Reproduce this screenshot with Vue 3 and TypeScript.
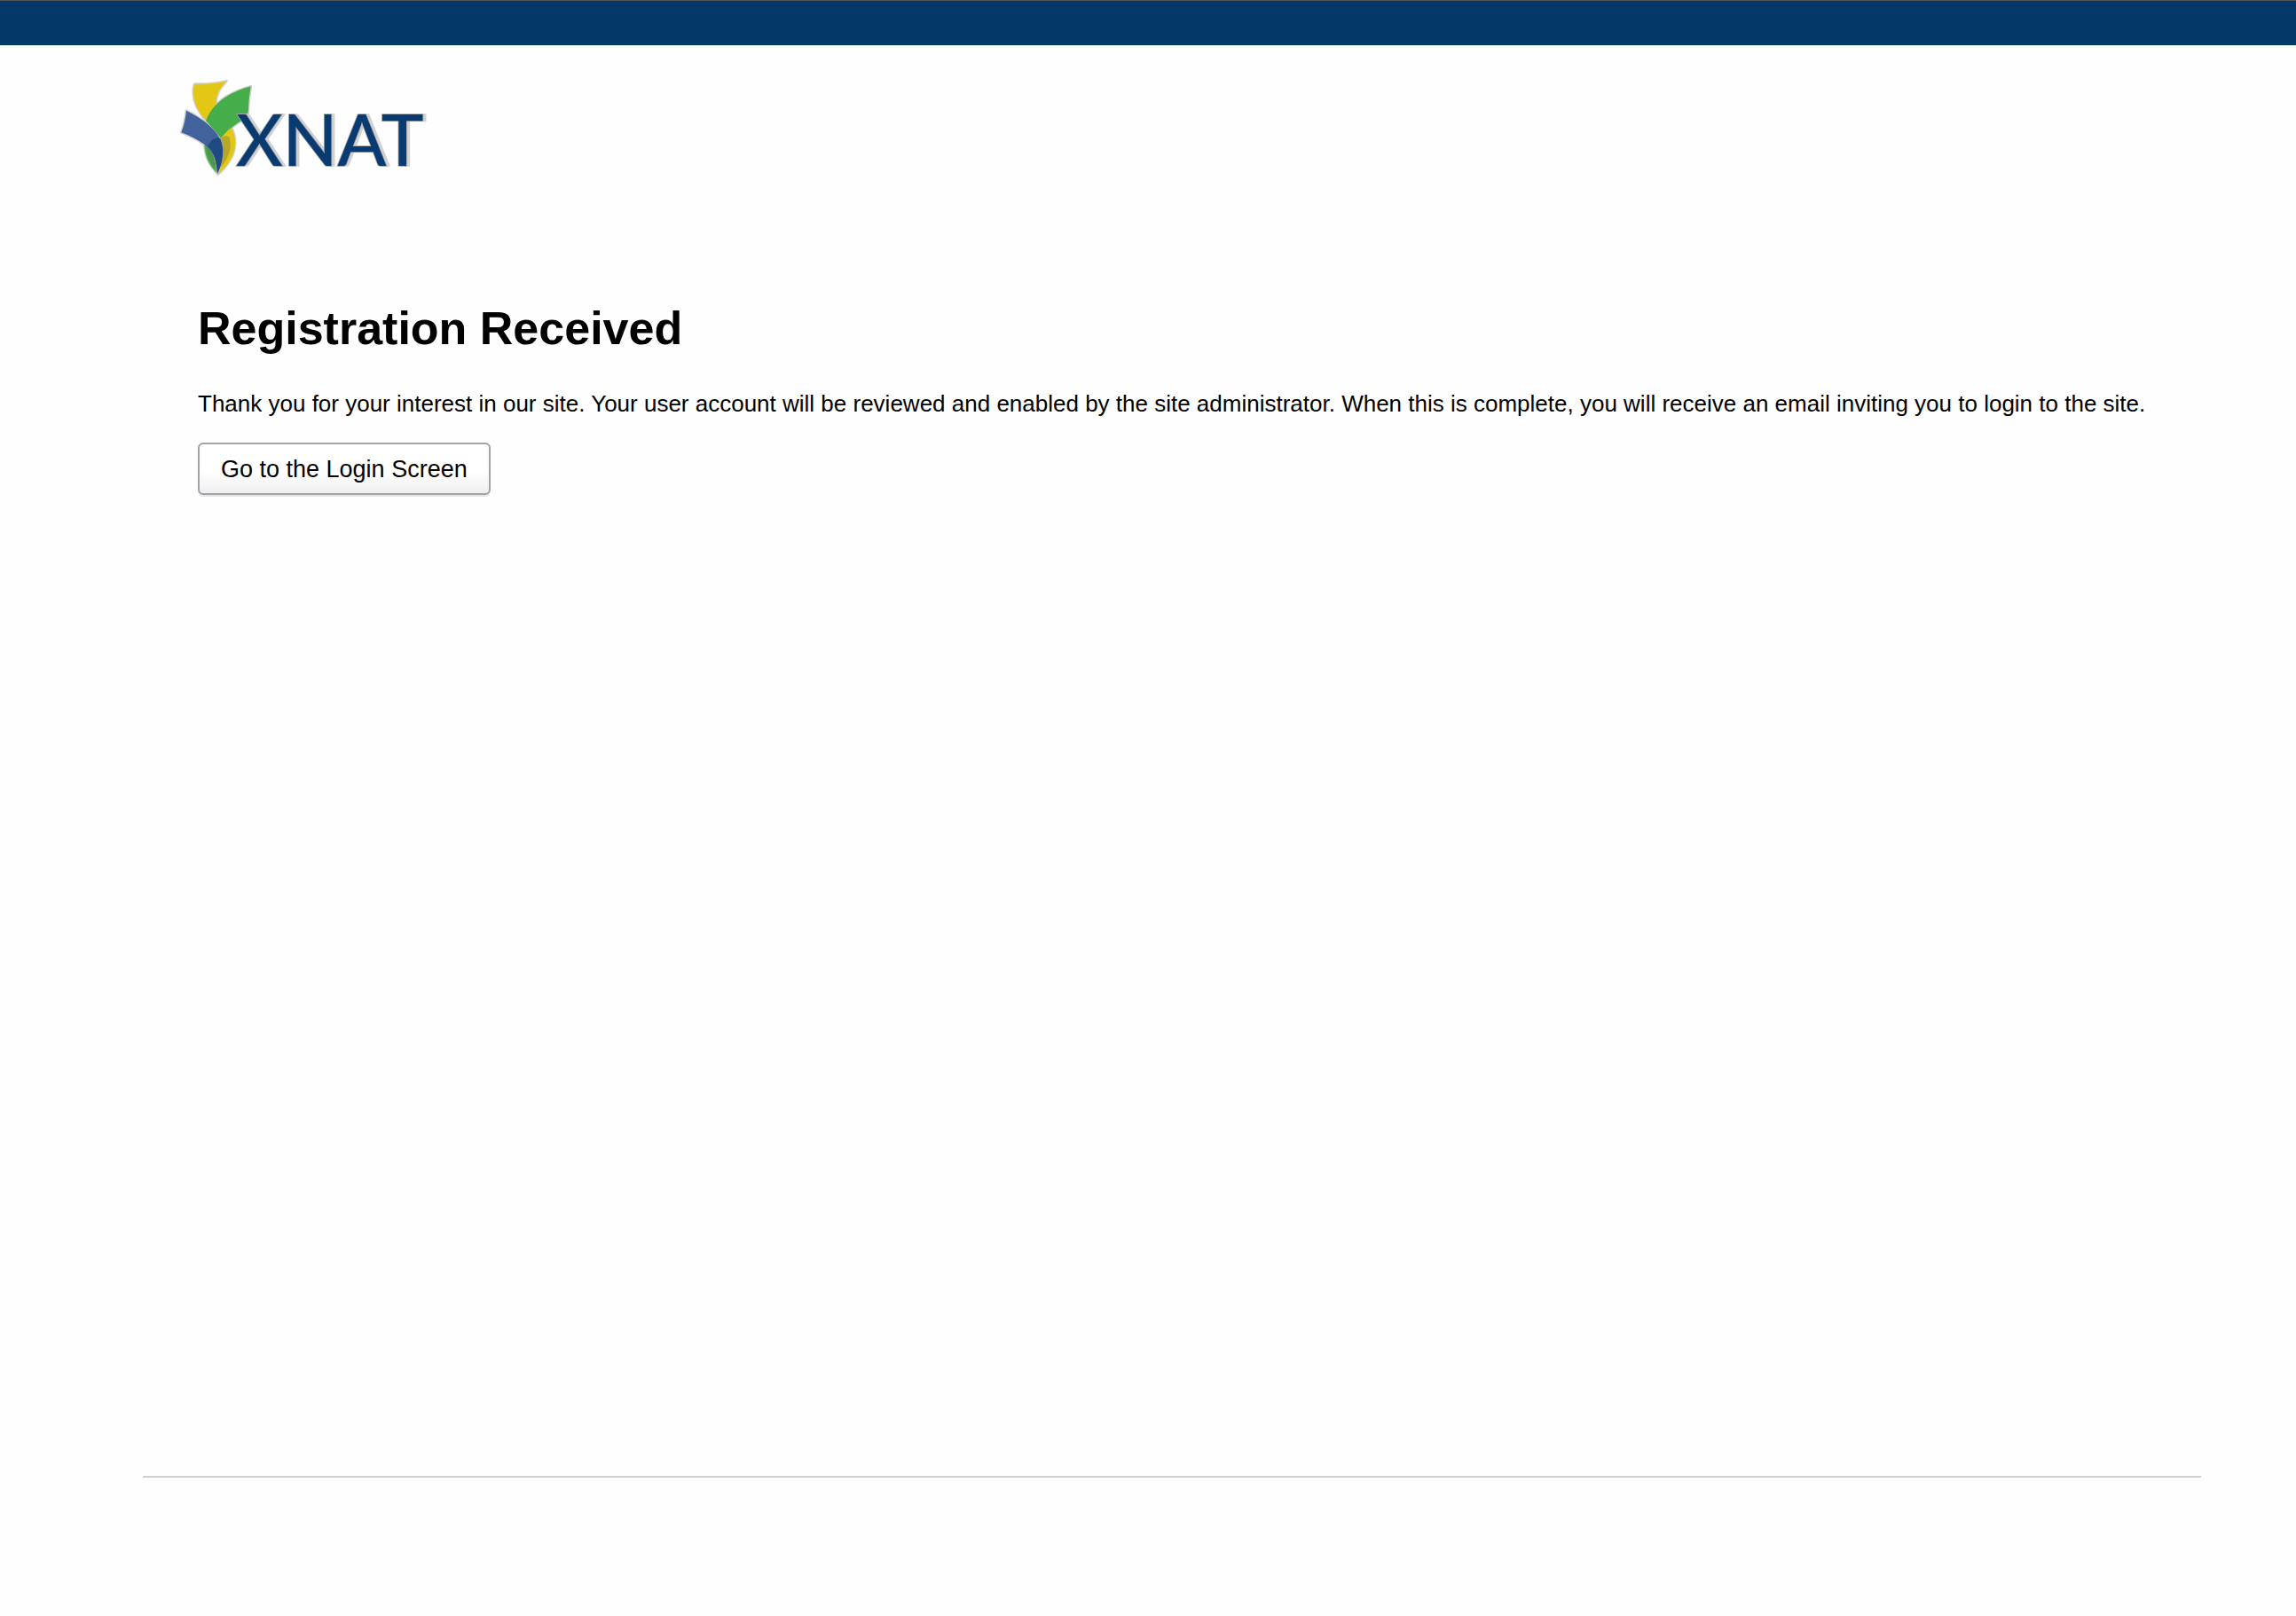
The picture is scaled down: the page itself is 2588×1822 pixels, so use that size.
<script setup lang="ts">
const title = 'Registration Received'
const message =
  'Thank you for your interest in our site. Your user account will be reviewed and enabled by the site administrator. When this is complete, you will receive an email inviting you to login to the site.'

function goToLogin(): void {
  window.location.hash = 'login'
}
</script>

<template>
  <div class="page">
    <div class="top-bar"></div>
    <header class="header">
      <a class="logo-link" href="#" aria-label="XNAT home">
        <svg class="logo" viewBox="0 0 900 420" aria-hidden="true">
          <g class="halo">
            <path d="M88 59Q145 62 196 49C172 76 160 95 161 127L126 182C98 151 80 118 84 76Q85 64 88 59Z" />
            <path d="M126 184C150 120 208 86 278 67Q270 112 269 157L245 184C214 204 190 224 177 243C162 224 148 207 126 184Z" />
            <path d="M60 149C130 184 178 225 184 278Q185 322 165 363C161 318 154 290 122 264Q86 239 43 223Q56 190 60 149Z" />
            <path d="M213 207C238 260 226 312 168 364C137 334 122 303 121 264Z" />
          </g>
          <path fill="#e2c815" d="M88 59Q145 62 196 49C172 76 160 95 161 127L126 182C98 151 80 118 84 76Q85 64 88 59Z" />
          <path fill="#e2c815" d="M213 207C238 260 226 312 168 364C184 323 190 279 177 243Q192 224 213 207Z" />
          <path fill="#45ad49" d="M126 184C150 120 208 86 278 67Q270 112 269 157L245 184C214 204 190 224 177 243C162 224 148 207 126 184Z" />
          <path fill="#45ad49" d="M121 262C151 283 160 316 162 359C137 334 122 303 121 262Z" />
          <path fill="#42629d" d="M60 149C130 184 178 225 184 278Q185 322 165 363C161 318 154 290 122 264Q86 239 43 223Q56 190 60 149Z" />
          <path fill="#093b70" opacity="0.6" d="M145 250Q160 238 176 243C188 280 186 324 165 363C162 318 156 291 132 269Z" />
          <path fill="#66684b" opacity="0.35" d="M177 243Q195 228 206 240C216 278 205 305 175 343Q191 292 177 243ZM127 270C148 287 157 310 160 349Q133 320 127 270Z" />
          <text class="word shade" x="238" y="337">XNAT</text>
          <text class="word" x="228" y="337">XNAT</text>
        </svg>
      </a>
    </header>
    <main class="content">
      <h1>{{ title }}</h1>
      <p>{{ message }}</p>
      <button type="button" @click="goToLogin">Go to the Login Screen</button>
    </main>
    <footer class="footer"></footer>
  </div>
</template>

<style>
body {
  margin: 0;
  background: #fefefe;
}
</style>

<style scoped>
.page {
  display: flex;
  flex-direction: column;
  min-height: 100vh;
  font-family: "Liberation Sans", Arial, sans-serif;
  color: #000;
}
.top-bar {
  height: 50px;
  border-top: 1px solid #555;
  background: #033868;
}
.header {
  padding: 24px 190px 0;
}
.logo-link {
  display: block;
  width: 300px;
}
.logo {
  display: block;
  width: 300px;
  height: 140px;
}
.halo {
  fill: #d2d2d2;
  stroke: #d2d2d2;
  stroke-width: 9px;
  stroke-linejoin: round;
}
.word {
  font-family: Lato, sans-serif;
  font-size: 242px;
  font-weight: 500;
  fill: #093b70;
  stroke: #a3a7ad;
  stroke-width: 5px;
  paint-order: stroke;
}
.shade {
  fill: #d2d2d2;
  stroke: #d2d2d2;
}
.content {
  flex: 1;
  padding: 125px 107px 0 223px;
}
h1 {
  margin: 0;
  font-size: 52px;
  line-height: 60px;
  font-weight: 700;
}
p {
  margin: 39px 0 28px;
  font-size: 26px;
  line-height: 32px;
}
button {
  display: block;
  height: 59px;
  padding: 0 24px;
  border: 2px solid #a1a3a8;
  border-radius: 6px;
  background: linear-gradient(#fff 55%, #eee);
  box-shadow: 0 2px 1px #e4e4e4;
  font-family: inherit;
  font-size: 27px;
  line-height: 32px;
  color: #000;
}
.footer {
  height: 156px;
  margin: 0 107px 0 161px;
  border-top: 2px solid #d0d0d0;
}
</style>
